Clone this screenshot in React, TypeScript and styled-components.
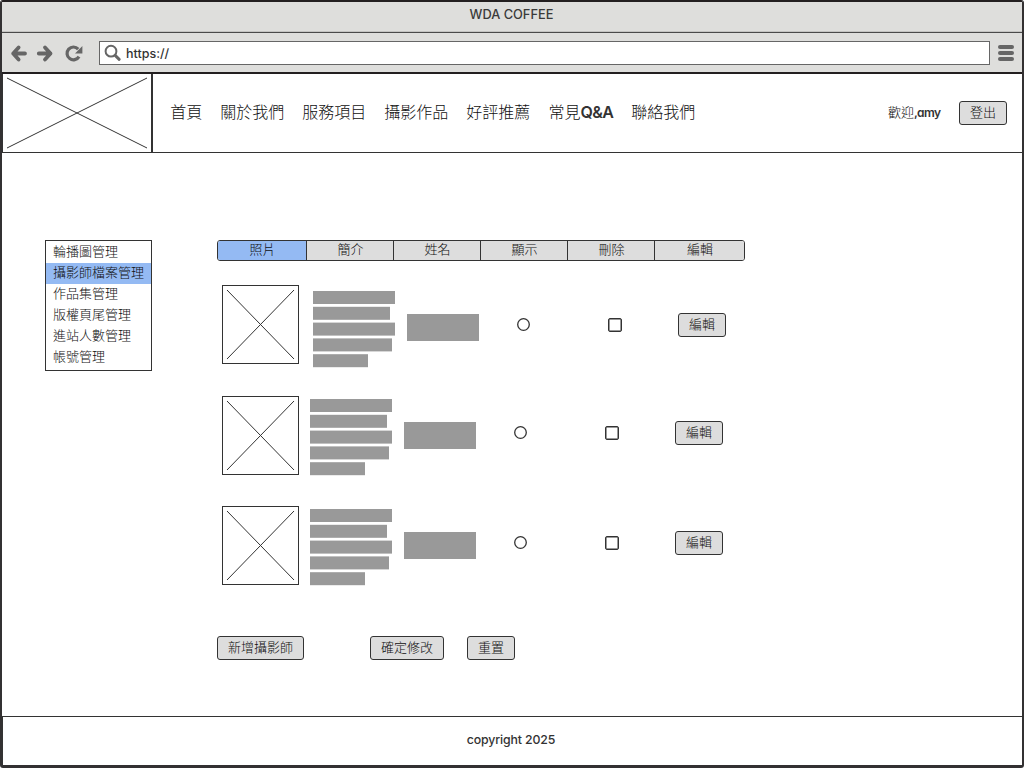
import React from "react";
import styled, { createGlobalStyle } from "styled-components";

const INK = "#333333";
const TEXT = "#101010";
const CHROME = "#dededc";
const FILL = "#dddddd";
const BLUE = "#94baf3";
const GREY = "#999999";
const ICON = "#666666";

const GlobalStyle = createGlobalStyle`
  *, *::before, *::after { box-sizing: border-box; }
  body {
    margin: 0;
    background: #fff;
    color: ${TEXT};
    font-family: Inter, "Noto Sans CJK TC", sans-serif;
    font-size: 13px;
    font-feature-settings: "cv11";
  }
  button { font: inherit; color: inherit; }
`;

const BrowserWindow = styled.div`
  width: 1024px;
  height: 768px;
  display: flex;
  flex-direction: column;
  overflow: hidden;
  background: #fff;
  border: 2px solid #333132;
  border-top-color: #231f20;
  border-bottom-width: 3px;
  border-radius: 3px;
`;

const TitleBar = styled.div`
  height: 31px;
  flex: none;
  display: flex;
  justify-content: center;
  padding-top: 2px;
  padding-right: 1px;
  background: ${CHROME};
  border-bottom: 1px solid #4a4a4a;
  box-shadow: inset 0 -1px 0 #c4c4c2;
  line-height: 21px;
  font-size: 12.8px;
  font-weight: 500;
  color: #3a3a3a;
`;

const Toolbar = styled.div`
  height: 41px;
  flex: none;
  display: flex;
  align-items: center;
  padding: 0 8px 0 9px;
  background: ${CHROME};
  border-bottom: 2px solid #231f20;
`;

const NavIcon = styled.svg<{ $gap: number }>`
  width: 17px;
  height: 18px;
  flex: none;
  margin-right: ${(p) => p.$gap}px;
  overflow: visible;
`;

const AddressBar = styled.div`
  flex: 1;
  height: 24px;
  display: flex;
  align-items: center;
  padding-left: 4px;
  margin-top: 1px;
  margin-right: 8px;
  background: #fff;
  border: 1px solid ${ICON};
`;

const Url = styled.span`
  margin-left: 5px;
  font-weight: 500;
  font-size: 12.5px;
  color: ${INK};
`;

const MenuIcon = styled.div`
  width: 16px;
  height: 16px;
  display: flex;
  flex-direction: column;
  justify-content: space-between;
  margin-top: 1px;
`;

const MenuBar = styled.span`
  height: 4px;
  border-radius: 2px;
  background: ${ICON};
`;

const Header = styled.header`
  height: 79px;
  flex: none;
  display: flex;
  align-items: center;
  padding-right: 15px;
  border-bottom: 1px solid ${INK};
`;

const Logo = styled.div`
  width: 151px;
  height: 78px;
  border-left: 1px solid ${INK};
  border-right: 2px solid ${INK};
`;

const Cross = styled.svg`
  display: block;
  width: 100%;
  height: 100%;
`;

const Nav = styled.nav`
  display: flex;
  gap: 18px;
  margin-left: 17.3px;
  padding-bottom: 2px;
  font-size: 16px;
  line-height: 24px;
  font-weight: 300;
`;

const NavItem = styled.span`
  white-space: nowrap;
`;

const Latin = styled.span<{ $spacing?: number; $size?: number }>`
  font-weight: 600;
  font-size: ${(p) => p.$size ?? 16}px;
  letter-spacing: ${(p) => p.$spacing ?? 0}px;
  color: ${INK};
`;

const Welcome = styled.span`
  margin-left: auto;
  margin-right: 18.5px;
  padding-bottom: 2px;
  line-height: 20px;
  font-weight: 300;
`;

const Button = styled.button<{ $left?: number; $top?: number }>`
  height: 24px;
  flex: none;
  margin: ${(p) => p.$top ?? 0}px 0 0 ${(p) => p.$left ?? 0}px;
  padding: 0 10px 2px;
  border: 1px solid ${INK};
  border-radius: 3px;
  background: ${FILL};
  line-height: 20px;
  font-weight: 300;
  white-space: nowrap;
`;

const Main = styled.main`
  flex: 1;
  display: flex;
  align-items: flex-start;
  padding: 87px 0 0 43px;
`;

const SideMenu = styled.ul`
  width: 107px;
  height: 131px;
  flex: none;
  margin: 0 65px 0 0;
  padding: 1px 0 0;
  list-style: none;
  border: 1px solid ${INK};
`;

const SideItem = styled.li<{ $active?: boolean }>`
  height: 21px;
  padding-left: 7px;
  line-height: 18px;
  font-weight: 300;
  white-space: nowrap;
  background: ${(p) => (p.$active ? BLUE : "transparent")};
`;

const Content = styled.section`
  width: 528px;
`;

const Tabs = styled.div`
  display: grid;
  grid-template-columns: 89px repeat(4, 87px) 89px;
  height: 21px;
  overflow: hidden;
  margin-bottom: 24px;
  border: 1px solid ${INK};
  border-radius: 3px;
`;

const Tab = styled.div<{ $active?: boolean }>`
  padding-left: 1px;
  text-align: center;
  line-height: 16px;
  font-weight: 300;
  background: ${(p) => (p.$active ? BLUE : FILL)};
  &:not(:last-child) { border-right: 1px solid ${INK}; }
`;

const Row = styled.div<{ $gap: number }>`
  display: flex;
  align-items: flex-start;
  height: 79px;
  margin-left: 5px;
  margin-bottom: ${(p) => p.$gap}px;
`;

const Photo = styled.div`
  width: 77px;
  height: 79px;
  flex: none;
  border: 1px solid ${INK};
`;

const Fields = styled.div<{ $left: number; $top: number }>`
  display: flex;
  align-items: flex-start;
  margin: ${(p) => p.$top}px 0 0 ${(p) => p.$left}px;
`;

const Greeked = styled.svg`
  display: block;
  width: 82px;
  height: 77px;
  fill: ${GREY};
`;

const NameBlock = styled.div`
  width: 72px;
  height: 27px;
  margin: 23px 0 0 12px;
  background: ${GREY};
`;

const Radio = styled.svg`
  width: 13px;
  height: 13px;
  margin: 27px 0 0 38px;
  fill: #fff;
  stroke: ${INK};
  stroke-width: 1.3;
`;

const Checkbox = styled.span`
  width: 14px;
  height: 14px;
  margin: 27px 0 0 78px;
  border: 1px solid ${INK};
  border-radius: 2px;
  box-shadow: inset 0 0 0 0.5px ${INK};
`;

const Actions = styled.div`
  display: flex;
`;

const Footer = styled.footer`
  height: 49px;
  flex: none;
  display: flex;
  justify-content: center;
  padding: 13px 3px 0 0;
  border-top: 1px solid ${INK};
  border-left: 1px solid ${INK};
  line-height: 20px;
  font-size: 12.3px;
  font-weight: 500;
  letter-spacing: -0.12px;
  color: ${INK};
`;

const tabs = ["照片", "簡介", "姓名", "顯示", "刪除", "編輯"];
const sideItems = ["輪播圖管理", "攝影師檔案管理", "作品集管理", "版權頁尾管理", "進站人數管理", "帳號管理"];
const navItems = ["首頁", "關於我們", "服務項目", "攝影作品", "好評推薦"];
const lineWidths = [82, 77, 82, 79, 55];
const rows = [
  { gap: 32, left: 14, top: 6 },
  { gap: 31, left: 11, top: 3 },
  { gap: 51, left: 11, top: 3 },
];

export default function App() {
  return (
    <>
      <GlobalStyle />
      <BrowserWindow>
        <TitleBar>WDA COFFEE</TitleBar>
        <Toolbar>
          <NavIcon $gap={8} viewBox="0 0 17 18" fill="none" stroke={ICON} strokeWidth="3.8" strokeLinecap="round">
            <path d="M2.2 9.5H14M7.6 3.5L2.2 9.5L7.6 15.5" strokeLinejoin="round" />
          </NavIcon>
          <NavIcon $gap={12} viewBox="0 0 17 18" fill="none" stroke={ICON} strokeWidth="3.8" strokeLinecap="round">
            <path d="M14.5 9.5H2.8M9 3.5L14.5 9.5L9 15.5" strokeLinejoin="round" />
          </NavIcon>
          <NavIcon $gap={17} viewBox="0 0 17 18">
            <path d="M13.2 5.1A6.4 6.4 0 1 0 14 12.6" fill="none" stroke={ICON} strokeWidth="3.2" />
            <path d="M17.4 2V9.4H10Z" fill={ICON} />
          </NavIcon>
          <AddressBar>
            <NavIcon $gap={0} viewBox="0 0 17 18" fill="none" stroke={ICON}>
              <circle cx="7" cy="7.2" r="5.4" strokeWidth="2" />
              <path d="M11.4 11.7L15.2 15.3" strokeWidth="3" strokeLinecap="round" />
            </NavIcon>
            <Url>https://</Url>
          </AddressBar>
          <MenuIcon>
            <MenuBar />
            <MenuBar />
            <MenuBar />
          </MenuIcon>
        </Toolbar>
        <Header>
          <Logo>
            <Cross viewBox="0 0 148 78" stroke={INK} strokeWidth="1">
              <path d="M4 4L144 74M144 4L4 74" />
            </Cross>
          </Logo>
          <Nav>
            {navItems.map((item) => (
              <NavItem key={item}>{item}</NavItem>
            ))}
            <NavItem>
              常見<Latin $spacing={-0.6}>Q&amp;A</Latin>
            </NavItem>
            <NavItem>聯絡我們</NavItem>
          </Nav>
          <Welcome>
            歡迎<Latin $size={12} $spacing={-0.6}>,amy</Latin>
          </Welcome>
          <Button>登出</Button>
        </Header>
        <Main>
          <SideMenu>
            {sideItems.map((item, i) => (
              <SideItem key={item} $active={i === 1}>
                {item}
              </SideItem>
            ))}
          </SideMenu>
          <Content>
            <Tabs>
              {tabs.map((tab, i) => (
                <Tab key={tab} $active={i === 0}>
                  {tab}
                </Tab>
              ))}
            </Tabs>
            {rows.map((row, i) => (
              <Row key={i} $gap={row.gap}>
                <Photo>
                  <Cross viewBox="0 0 75 77" stroke={INK} strokeWidth="1">
                    <path d="M4 4L71 73M71 4L4 73" />
                  </Cross>
                </Photo>
                <Fields $left={row.left} $top={row.top}>
                  <Greeked viewBox="0 0 82 77">
                    {lineWidths.map((w, n) => (
                      <rect key={n} y={n * 15.8} width={w} height="13" />
                    ))}
                  </Greeked>
                  <NameBlock />
                  <Radio viewBox="0 0 13 13">
                    <circle cx="6.5" cy="6.5" r="5.8" />
                  </Radio>
                  <Checkbox />
                  <Button $left={56} $top={22}>編輯</Button>
                </Fields>
              </Row>
            ))}
            <Actions>
              <Button>新增攝影師</Button>
              <Button $left={66}>確定修改</Button>
              <Button $left={23}>重置</Button>
            </Actions>
          </Content>
        </Main>
        <Footer>copyright 2025</Footer>
      </BrowserWindow>
    </>
  );
}
